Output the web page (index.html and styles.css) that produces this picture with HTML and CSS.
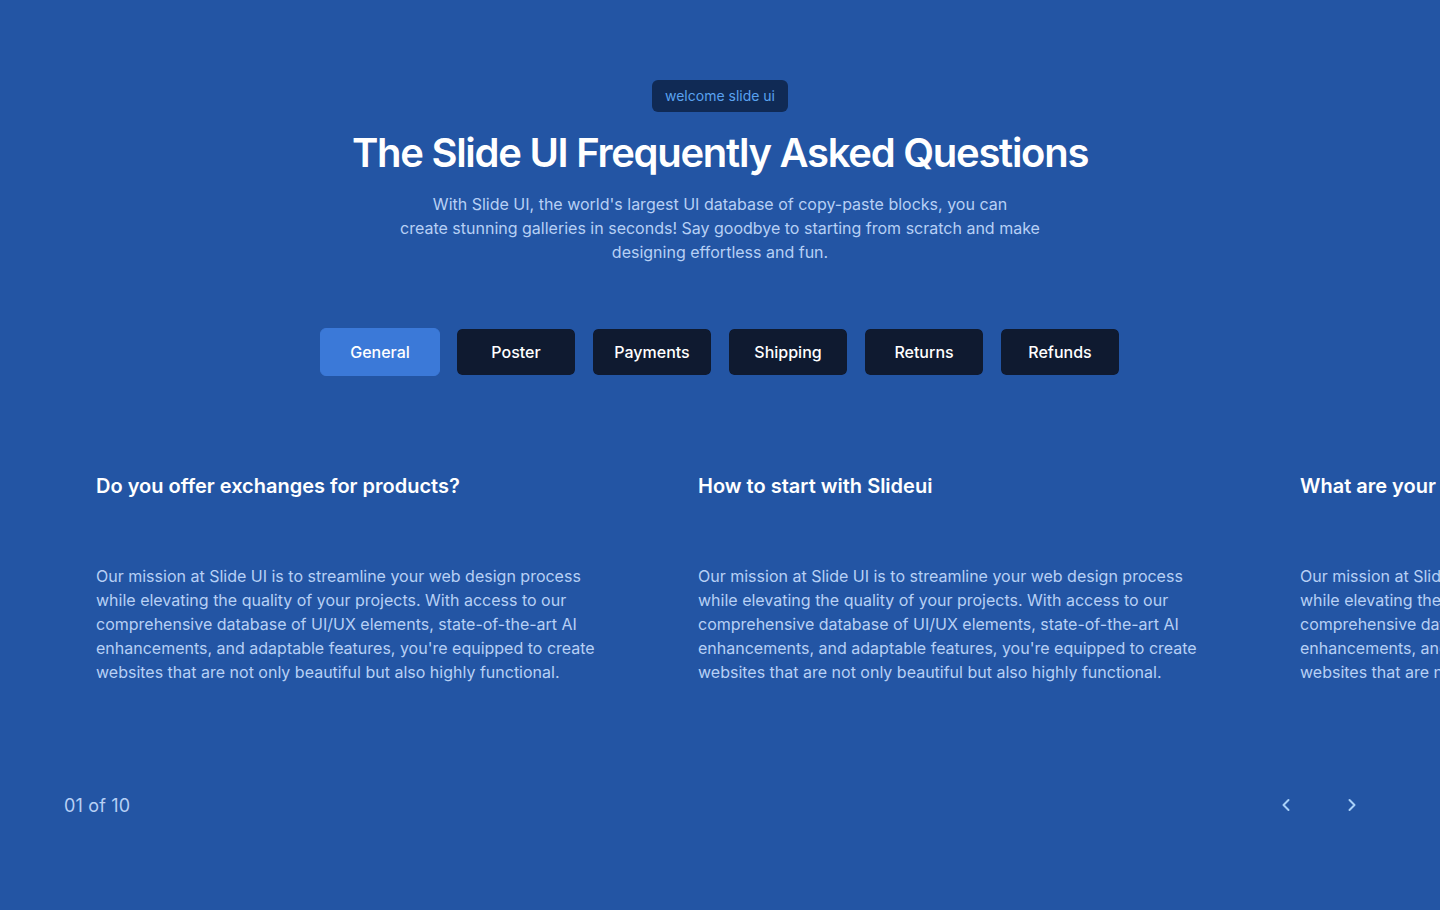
FILE: index.html
```html
<!DOCTYPE html>
<html lang="en">
<head>
<meta charset="utf-8">
<title>Slide UI FAQ</title>
<link rel="stylesheet" href="styles.css">
</head>
<body>
<main class="page">
  <header class="hero">
    <span class="badge">welcome slide ui</span>
    <h1 class="title">The Slide UI Frequently Asked Questions</h1>
    <p class="lead">With Slide UI, the world's largest UI database of copy-paste blocks, you can<br>create stunning galleries in seconds! Say goodbye to starting from scratch and make designing effortless and fun.</p>
  </header>

  <nav class="tabs">
    <button class="tab tab-active">General</button>
    <button class="tab">Poster</button>
    <button class="tab">Payments</button>
    <button class="tab">Shipping</button>
    <button class="tab">Returns</button>
    <button class="tab">Refunds</button>
  </nav>

  <section class="slider">
    <div class="track">
      <article class="card">
        <h2 class="card-title">Do you offer exchanges for products?</h2>
        <p class="card-text">Our mission at Slide UI is to streamline your web design process while elevating the quality of your projects. With access to our comprehensive database of UI/UX elements, state-of-the-art AI enhancements, and adaptable features, you're equipped to create websites that are not only beautiful but also highly functional.</p>
      </article>
      <article class="card">
        <h2 class="card-title">How to start with Slideui</h2>
        <p class="card-text">Our mission at Slide UI is to streamline your web design process while elevating the quality of your projects. With access to our comprehensive database of UI/UX elements, state-of-the-art AI enhancements, and adaptable features, you're equipped to create websites that are not only beautiful but also highly functional.</p>
      </article>
      <article class="card">
        <h2 class="card-title">What are your shipping options?</h2>
        <p class="card-text">Our mission at Slide UI is to streamline your web design process while elevating the quality of your projects. With access to our comprehensive database of UI/UX elements, state-of-the-art AI enhancements, and adaptable features, you're equipped to create websites that are not only beautiful but also highly functional.</p>
      </article>
    </div>
  </section>

  <footer class="controls">
    <span class="counter">01 of 10</span>
    <div class="arrows">
      <button class="arrow" aria-label="Previous">
        <svg width="20" height="20" viewBox="0 0 24 24" fill="none" stroke="currentColor" stroke-width="2.4" stroke-linecap="round" stroke-linejoin="round"><path d="M15 18l-6-6 6-6"/></svg>
      </button>
      <button class="arrow" aria-label="Next">
        <svg width="20" height="20" viewBox="0 0 24 24" fill="none" stroke="currentColor" stroke-width="2.4" stroke-linecap="round" stroke-linejoin="round"><path d="M9 18l6-6-6-6"/></svg>
      </button>
    </div>
  </footer>
</main>
</body>
</html>
```
FILE: styles.css
```css
* { box-sizing: border-box; }
html, body {
  margin: 0;
  padding: 0;
  background: #2355a4;
  overflow: hidden;
}
body {
  font-family: Inter, "Noto Sans", sans-serif;
  color: #ffffff;
  width: 1440px;
  height: 910px;
}
.page {
  display: flex;
  flex-direction: column;
  padding-top: 80px;
}
.hero {
  display: flex;
  flex-direction: column;
  align-items: center;
  text-align: center;
}
.badge {
  display: inline-block;
  height: 32px;
  line-height: 32px;
  padding: 0 13px;
  border-radius: 6px;
  background: #102a55;
  color: #5aa2f0;
  font-size: 14px;
}
.title {
  margin: 17px 0 0;
  font-size: 40px;
  line-height: 48px;
  font-weight: 600;
  letter-spacing: -0.032em;
  color: #ffffff;
}
.lead {
  margin: 15px 0 0;
  width: 648px;
  font-size: 16px;
  line-height: 24px;
  color: #b7d0f5;
}
.tabs {
  margin-top: 64px;
  display: flex;
  justify-content: center;
  gap: 16px;
}
.tab {
  width: 120px;
  height: 48px;
  border: 1px solid #2355a4;
  border-radius: 6px;
  background: #0f1a30;
  color: #ffffff;
  font-family: Inter, "Noto Sans", sans-serif;
  font-size: 16px;
  font-weight: 500;
  padding: 0;
  background-clip: padding-box;
}
.tab-active {
  background: #3b79d8;
  border-color: #3b79d8;
}
.slider {
  margin-top: 96px;
  padding-left: 64px;
  overflow: hidden;
}
.track {
  display: flex;
  width: max-content;
}
.card {
  width: 602px;
  padding: 0 32px;
  flex-shrink: 0;
}
.card-title {
  margin: 0;
  font-size: 20px;
  line-height: 28px;
  font-weight: 600;
  color: #ffffff;
  white-space: nowrap;
}
.card-text {
  margin: 64px 0 0;
  max-width: 512px;
  font-size: 16px;
  line-height: 24px;
  color: #b7d0f5;
}
.controls {
  margin-top: 97px;
  padding: 0 64px;
  display: flex;
  justify-content: space-between;
  align-items: center;
}
.counter {
  font-size: 18px;
  line-height: 28px;
  letter-spacing: 0.01em;
  color: #b7d0f5;
}
.arrows {
  display: flex;
  gap: 18px;
  margin-bottom: 2px;
}
.arrow {
  width: 48px;
  height: 48px;
  display: flex;
  align-items: center;
  justify-content: center;
  background: transparent;
  border: 0;
  padding: 0;
  color: #a8d0f8;
}
```
